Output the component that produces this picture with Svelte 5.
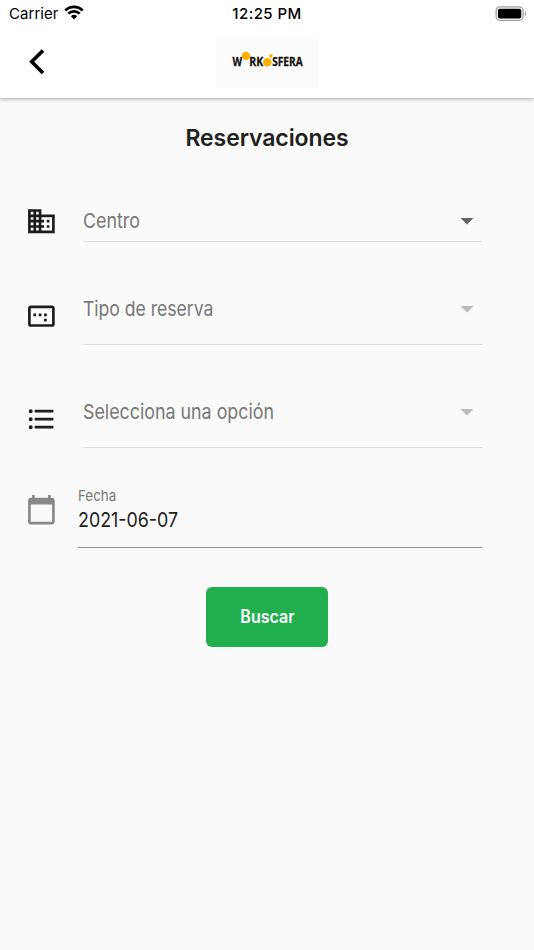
<script>
	let centro = 'Centro';
	let tipo = 'Tipo de reserva';
	let opcion = 'Selecciona una opción';
	let fecha = '2021-06-07';

	const icons = {
		domain:
			'M12 7V3H2v18h20V7H12zM6 19H4v-2h2v2zm0-4H4v-2h2v2zm0-4H4V9h2v2zm0-4H4V5h2v2zm4 12H8v-2h2v2zm0-4H8v-2h2v2zm0-4H8V9h2v2zm0-4H8V5h2v2zm10 12h-8v-2h2v-2h-2v-2h2v-2h-2V9h8v10zm-2-8h-2v2h2v-2zm0 4h-2v2h2v-2z',
		ratio:
			'M16 10h-2v2h2v-2zm0 4h-2v2h2v-2zm-8-4H6v2h2v-2zm4 0h-2v2h2v-2zm8-6H4c-1.1 0-2 .9-2 2v12c0 1.1.9 2 2 2h16c1.1 0 2-.9 2-2V6c0-1.1-.9-2-2-2zm0 14H4V6h16v12z',
		list: 'M4 10.5c-.83 0-1.5.67-1.5 1.5s.67 1.5 1.5 1.5 1.5-.67 1.5-1.5-.67-1.5-1.5-1.5zm0-6c-.83 0-1.5.67-1.5 1.5S3.17 7.5 4 7.5 5.5 6.83 5.5 6 4.83 4.5 4 4.5zm0 12c-.83 0-1.5.68-1.5 1.5s.68 1.5 1.5 1.5 1.5-.68 1.5-1.5-.67-1.5-1.5-1.5zM7 19h14v-2H7v2zm0-6h14v-2H7v2zm0-8v2h14V5H7z',
		calendar:
			'M20 3h-1V1h-2v2H7V1H5v2H4c-1.1 0-2 .9-2 2v16c0 1.1.9 2 2 2h16c1.1 0 2-.9 2-2V5c0-1.1-.9-2-2-2zm0 18H4V8h16v13z'
	};

	const selects = [
		{ id: 'centro', icon: icons.domain, label: centro, enabled: true },
		{ id: 'tipo', icon: icons.ratio, label: tipo, enabled: false },
		{ id: 'opcion', icon: icons.list, label: opcion, enabled: false }
	];
</script>

<div class="screen">
	<header>
		<div class="status">
			<div class="carrier">
				<span>Carrier</span>
				<svg class="wifi" viewBox="0 0 20 15" width="20" height="15">
					<path d="M1.3 5.4a12.6 12.6 0 0 1 17.4 0" />
					<path d="M4.3 8.6a8.2 8.2 0 0 1 11.4 0" />
					<path class="dot" d="M6.9 11.3a4.5 4.5 0 0 1 6.2 0L10 14.4z" />
				</svg>
			</div>
			<span class="clock">12:25 PM</span>
			<svg class="battery" viewBox="0 0 32 16" width="32" height="16">
				<rect class="shell" x="1.1" y=".9" width="27" height="13.4" rx="4" />
				<rect x="2.9" y="2.8" width="23.4" height="9.6" rx="2" />
				<path class="cap" d="M29.8 5.2c1.9.7 1.9 4.1 0 4.8z" />
			</svg>
		</div>
		<div class="appbar">
			<button class="back" aria-label="Atrás">
				<svg viewBox="0 0 16 26" width="16" height="26">
					<path d="M14 1.4 2.7 12.7 14 24" />
				</svg>
			</button>
			<div class="logo">
				<svg viewBox="0 0 103 52" width="103" height="52" role="img" aria-label="Workosfera">
					<text x="16.4" y="30.3" textLength="9.6" lengthAdjust="spacingAndGlyphs">W</text>
					<text x="33.2" y="30.3" textLength="14" lengthAdjust="spacingAndGlyphs">RK</text>
					<text x="56.2" y="30.3" textLength="30.5" lengthAdjust="spacingAndGlyphs">SFERA</text>
					<circle cx="30" cy="19.9" r="4.2" />
					<circle cx="51.3" cy="26.3" r="4.3" />
					<circle cx="54.9" cy="19.9" r="1.8" />
				</svg>
			</div>
		</div>
	</header>

	<main>
		<h1>Reservaciones</h1>

		{#each selects as item}
			<div class="row {item.id}">
				<svg class="icon" viewBox="-0.3 -0.1 24 24"><path d={item.icon} /></svg>
				<div class="select" class:disabled={!item.enabled}>
					<span class="label">{item.label}</span>
					<svg class="arrow" viewBox="0 0 14 7" width="14" height="7"><path d="M.5 0h13L7 6.5z" /></svg>
				</div>
			</div>
		{/each}

		<div class="row fecha">
			<svg class="icon" viewBox="-0.3 0.2 24 24"><path d={icons.calendar} /></svg>
			<div class="date">
				<span class="caption">Fecha</span>
				<span class="value">{fecha}</span>
			</div>
		</div>

		<button class="buscar"><span>Buscar</span></button>
	</main>
</div>

<style>
	:global(body) {
		margin: 0;
	}

	.screen {
		display: flex;
		flex-direction: column;
		height: 950px;
		background: #fafafa;
		font-family: Inter, 'Liberation Sans', sans-serif;
		color: #1f2121;
	}

	header {
		height: 98px;
		background: #fff;
		box-shadow: 0 1px 4px rgba(0, 0, 0, 0.35);
	}

	.status {
		display: grid;
		grid-template-columns: 1fr auto 1fr;
		align-items: center;
		height: 28px;
		padding: 0 7px 0 9px;
		color: #000;
		font-size: 15px;
		line-height: 28px;
	}

	.carrier {
		display: flex;
		align-items: center;
		gap: 5px;
		letter-spacing: 0.05px;
	}

	.wifi {
		margin-top: -3px;
	}

	.wifi path {
		fill: none;
		stroke: #000;
		stroke-width: 2.7;
	}

	.wifi .dot {
		fill: #000;
		stroke: none;
	}

	.clock {
		margin-left: -2px;
		font-weight: 500;
		letter-spacing: 0.45px;
	}

	.battery {
		justify-self: end;
		margin-top: -1px;
	}

	.battery .shell {
		fill: none;
		stroke: #a2a2a2;
		stroke-width: 1.3;
	}

	.battery .cap {
		fill: #999;
	}

	.appbar {
		display: grid;
		grid-template-columns: 1fr auto 1fr;
		align-items: center;
		height: 69px;
	}

	button {
		border: 0;
		padding: 0;
		font-family: inherit;
		cursor: pointer;
	}

	.back {
		justify-self: start;
		display: flex;
		margin: -1px 0 0 29px;
		background: none;
	}

	.back path {
		fill: none;
		stroke: #000;
		stroke-width: 3.6;
	}

	.logo {
		display: flex;
		margin-top: -1px;
		background: #fcfcfc;
	}

	.logo text {
		font: 700 12px 'Open Sans', sans-serif;
		fill: #111;
		stroke: #111;
		stroke-width: 0.3;
	}

	.logo circle {
		fill: #ffb000;
	}

	main {
		display: flex;
		flex-direction: column;
	}

	h1 {
		margin: 24px 0 0;
		font-size: 23px;
		font-weight: 600;
		letter-spacing: -0.1px;
		line-height: 32px;
		text-align: center;
	}

	.row {
		display: flex;
		align-items: center;
		padding: 0 52px 0 25px;
	}

	.icon {
		flex: none;
		width: 32px;
		height: 32px;
		fill: #1c1c1e;
	}

	.select {
		flex: 1;
		display: flex;
		align-items: flex-start;
		justify-content: space-between;
		box-sizing: border-box;
		margin-left: 26px;
		padding-right: 8px;
		border-bottom: 1px solid #dcdcdc;
	}

	.label,
	.caption,
	.value {
		transform-origin: left;
		white-space: nowrap;
	}

	.label {
		transform: scaleX(0.87);
		color: #777;
		font-size: 20.5px;
		line-height: 30px;
	}

	.tipo .label {
		transform: scaleX(0.857);
	}

	.arrow {
		margin-top: 12px;
		fill: #636363;
	}

	.disabled .arrow {
		fill: #bbb;
	}

	.centro {
		margin-top: 52px;
	}

	.centro .select {
		height: 36px;
	}

	.centro .icon {
		margin-top: -6px;
	}

	.tipo {
		margin-top: 52px;
	}

	.opcion {
		margin-top: 52px;
	}

	.tipo .select,
	.opcion .select {
		height: 51px;
	}

	.tipo .icon,
	.opcion .icon {
		margin-top: -7px;
	}

	.fecha {
		margin-top: 38px;
	}

	.fecha .icon {
		margin-top: -15px;
		fill: #888;
	}

	.date {
		flex: 1;
		display: flex;
		flex-direction: column;
		box-sizing: border-box;
		height: 62px;
		margin-left: 21px;
		border-bottom: 1px solid #929292;
	}

	.caption {
		transform: scaleX(0.89);
		color: #777;
		font-size: 15px;
		line-height: 20px;
	}

	.value {
		transform: scaleX(0.87);
		font-size: 20.5px;
		line-height: 27px;
	}

	.buscar {
		align-self: center;
		width: 122px;
		height: 60px;
		margin-top: 39px;
		border-radius: 6px;
		background: #20af4c;
		color: #fff;
		font-size: 18px;
		font-weight: 600;
	}

	.buscar span {
		display: inline-block;
		padding-bottom: 2px;
		transform: scaleX(0.89);
	}
</style>
